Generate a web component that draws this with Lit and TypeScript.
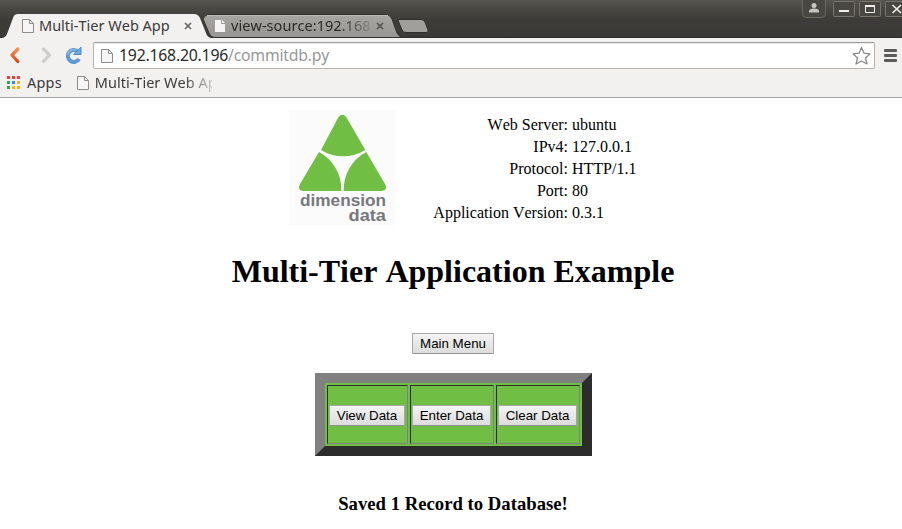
import { LitElement, html, css, svg } from "lit";
import { customElement, property } from "lit/decorators.js";

@customElement("page-icon")
class PageIcon extends LitElement {
  @property({ type: Boolean }) solid = false;
  static styles = css`
    :host { display: block; width: 12px; height: 14px; flex: none; }
    svg { display: block; }
  `;
  render() {
    return this.solid
      ? html`<svg width="12" height="14"><path d="M1 1H7V5H11V13H1Z" fill="#f4f4f3" /><path d="M8 1L11 4H8Z" fill="#f4f4f3" /></svg>`
      : html`<svg width="12" height="14"><path d="M.5 .5H7.5L11.5 4.5V13.5H.5Z" fill="#f6f6f6" stroke="#8c8c8c" /><path d="M7.5 .5V4.5H11.5" fill="none" stroke="#8c8c8c" /></svg>`;
  }
}

@customElement("browser-chrome")
class BrowserChrome extends LitElement {
  static styles = css`
    :host { display: block; font-family: "Noto Sans", "Open Sans", sans-serif; color: #3b3b3b; }
    * { box-sizing: border-box; }
    svg { display: block; flex: none; }
    .title-bar { height: 38px; display: flex; align-items: flex-end; position: relative;
      background: linear-gradient(#57564f 0, #484742 9px, #3d3c38 20px, #3b3a36 36px, #2c2b28 38px); }
    .tab { position: relative; height: 24px; display: flex; align-items: center; }
    .tab > * { position: relative; }
    .tab .shape { position: absolute; left: 0; top: 0; }
    .active { width: 202px; padding-left: 22px; z-index: 2; }
    .other { width: 194px; padding-left: 12px; }
    .tab .label { margin: 0 0 2px 5px; white-space: nowrap; overflow: hidden; font-size: 14.5px; line-height: 22px; }
    .active .label { width: 133px; }
    .other .label { width: 139px; color: #2b2923; letter-spacing: .05px;
      -webkit-mask-image: linear-gradient(90deg, #000 108px, transparent 146px); }
    .active .close { margin-left: 12px; }
    .other .close { margin-left: 6px; }
    .new-tab { margin: 0 0 4px 1px; }
    .window { position: absolute; right: 0; top: 0; }
    .toolbar { height: 34px; background: #f2f1f0; display: flex; padding: 4px 0 0 8px; }
    .nav { display: flex; width: 85px; }
    .address { width: 782px; height: 27px; border: 1px solid #b5b4b2; border-top-color: #999; border-radius: 2px;
      background: #fff; display: flex; align-items: center; padding: 0 3px 0 7px; box-shadow: inset 0 1px #eee; }
    .url { flex: 1; margin: 0 0 2px 6px; font-size: 15.8px; line-height: 24px; letter-spacing: -.22px; color: #292929; white-space: nowrap; }
    .path { color: #989898; }
    .menu { margin: 7px 0 0 9px; }
    .bookmarks { height: 26px; background: #f2f1f0; border-bottom: 1px solid #a5a4a3; display: flex; align-items: flex-start;
      padding: 0 0 0 7px; font-size: 14.5px; line-height: 20px; }
    .apps { margin: 4px 7px 0 0; }
    .apps-label { letter-spacing: .2px; }
    .bookmarks page-icon { margin: 4px 6px 0 15px; }
    .fade { width: 117px; overflow: hidden; white-space: nowrap;
      -webkit-mask-image: linear-gradient(90deg, #000 88px, transparent 125px); }
  `;
  render() {
    const colors = ["#ec4136", "#ec4136", "#ec4136", "#31a457", "#3188ed", "#f7b30b", "#31a457", "#f7b30b", "#f7b30b"];
    const close = (color: string) => html`<svg class="close" width="8" height="8"><path d="M1 1L7 7M7 1L1 7" stroke=${color} stroke-width="1.7" /></svg>`;
    return html`
      <div class="title-bar">
        <div class="tab active">
          <svg class="shape" width="212" height="24"><path d="M0 24C5 24 6 22 7 20L13 4Q14 0 18 0H194Q198 0 200 4L206 19Q207 23 211 24Z" fill="#f2f1f0" /></svg>
          <page-icon></page-icon><span class="label">Multi-Tier Web App</span>${close("#666")}
        </div>
        <div class="tab other">
          <svg class="shape" width="200" height="24">
            <defs><linearGradient id="g" x2="0" y2="1"><stop stop-color="#a7a6a3" /><stop offset="1" stop-color="#969592" /></linearGradient></defs>
            <path d="M1 5Q3 .5 7 .5H184Q188 .5 190 5L195 19Q197 22.5 200 23.5H12Q8 23 7 19Z" fill="url(#g)" stroke="#32312d" />
            <path d="M5 1.5H186" stroke="#bab9b6" />
          </svg>
          <page-icon solid></page-icon><span class="label">view-source:192.168</span>${close("#55534e")}
        </div>
        <svg class="new-tab" width="34" height="16"><path d="M2 1.5H24Q27 1.5 28 4L31 12Q32 14.5 29 14.5H9Q6 14.5 5 12L1.3 3Q1 1.5 2 1.5Z" fill="#a09f9c" stroke="#302f2b" /></svg>
        <svg class="window" width="102" height="20" fill="none">
          <path d="M2.500 0V14Q2.500 17.500 6 17.500H22Q25.500 17.500 25.500 14V0" fill="#484742" stroke="#69675f" />
          <circle cx="14" cy="5.500" r="2.500" fill="#c6c5c1" /><path d="M9 12.500V10.500Q10 8.500 14 8.500Q18 8.500 19 10.500V12.500Z" fill="#c6c5c1" />
          <g fill="#484742" stroke="#77756d"><rect x="33.500" y="1.500" width="21" height="15" rx="1" /><rect x="59.500" y="1.500" width="21" height="15" rx="1" /><rect x="85.500" y="1.500" width="21" height="15" rx="1" /></g>
          <path d="M39 11H49" stroke="#f0efeb" stroke-width="2" />
          <path d="M65.500 5.500H74.500V12.500H65.500Z" stroke="#f0efeb" /><path d="M65 6H75" stroke="#f0efeb" stroke-width="2" />
          <path d="M92.500 5L101 13M101 5L92.500 13" stroke="#f0efeb" stroke-width="1.700" />
        </svg>
      </div>
      <div class="toolbar">
        <div class="nav">
          <svg width="78" height="27" fill="none" stroke-linecap="round" stroke-linejoin="round">
            <defs><linearGradient id="o" x2="0" y2="1"><stop stop-color="#f59155" /><stop offset="1" stop-color="#d84b19" /></linearGradient></defs>
            <path d="M9.800 7L4 13L9.800 19.500" stroke="url(#o)" stroke-width="3.300" />
            <path d="M35.500 7L41.500 13L35.500 19.500" stroke="#cfcecb" stroke-width="3.300" />
            <path d="M69.500 9.200A6 6 0 1 0 71 17" stroke="#5c98d1" stroke-width="4" stroke-linecap="butt" />
            <path d="M73 5.500V12.500H66Z" fill="#72a8da" stroke="#4d8bc8" />
            <path d="M68 7.800A6 6 0 0 0 60 12.500" stroke="#8ab8e4" stroke-width="1.500" />
          </svg>
        </div>
        <div class="address">
          <page-icon></page-icon>
          <div class="url">192.168.20.196<span class="path">/commitdb.py</span></div>
          <svg width="19" height="20"><path d="M9.500 1.500L12 7.200L18 7.800L13.500 12L15 18L9.500 15L4 18L5.500 12L1 7.800L7 7.200Z" fill="none" stroke="#858585" stroke-linejoin="round" stroke-width="1.200" /></svg>
        </div>
        <svg class="menu" width="14" height="14"><g fill="#5c5b5b"><rect width="13" height="3" rx="1" /><rect y="5" width="13" height="3" rx="1" /><rect y="10" width="13" height="3" rx="1" /></g></svg>
      </div>
      <div class="bookmarks">
        <svg class="apps" width="13" height="13">${colors.map((c, i) => svg`<rect x=${(i % 3) * 5} y=${Math.floor(i / 3) * 5} width="3" height="3" fill=${c} />`)}</svg>
        <span class="apps-label">Apps</span><page-icon></page-icon><span class="fade">Multi-Tier Web App</span>
      </div>`;
  }
}

@customElement("app-root")
class AppRoot extends LitElement {
  static styles = css`
    :host { display: block; width: 902px; height: 529px; overflow: hidden; background: #fff; color: #000; font-family: "Liberation Serif", serif; font-kerning: none; }
    * { box-sizing: border-box; }
    .content { display: flex; flex-direction: column; align-items: center; padding: 12px 0 0 5px; }
    .info-row { width: 897px; display: flex; padding-left: 284px; }
    .logo { display: block; flex: none; background: #fbfbfb; }
    .info { display: grid; grid-template-columns: 173px auto; column-gap: 4px; grid-auto-rows: 22px; margin-top: 4px; font-size: 16px; line-height: 22px; }
    .name { text-align: right; white-space: nowrap; }
    h1 { margin: 28px 1px 0 0; font-size: 32px; line-height: 37px; }
    button { height: 21px; padding: 0; border: 1px solid #a7a7a7; border-bottom-color: #929292; border-radius: 1px; background: linear-gradient(#f4f4f4, #dcdcdc);
      font: 13.33px/18px "Liberation Sans", sans-serif; color: #000; white-space: nowrap; }
    .main { width: 82px; margin: 43px 1px 0 0; }
    .panel { width: 277px; height: 83px; margin-top: 19px; border: 10px solid; border-color: #808080 #2c2c2c #2c2c2c #808080; background: #70bf44;
      padding: 2px; display: grid; grid-template-columns: 81px 84px 84px; gap: 2px; }
    .cell { border: 1px solid; border-color: #2c2c2c #808080 #808080 #2c2c2c; display: flex; align-items: center; padding: 2px 2px 0 1px; }
    .cell button { width: 79px; }
    .cell:first-child button { width: 76px; }
    h3 { margin: 37px 1px 0 0; font-size: 18.72px; line-height: 22px; }
  `;
  render() {
    const info = [["Web Server:", "ubuntu"], ["IPv4:", "127.0.0.1"], ["Protocol:", "HTTP/1.1"], ["Port:", "80"], ["Application Version:", "0.3.1"]];
    return html`
      <browser-chrome></browser-chrome>
      <div class="content">
        <div class="info-row">
          <svg class="logo" width="106" height="115" viewBox="9 6 106 115">
            <g fill="#70bf44">
              <path d="M41 46L58.500 13Q62.300 8.500 66.200 13L85.300 46A42 42 0 0 1 41 46Z" />
              <path d="M39 48A42 42 0 0 1 61.200 87H23Q17 86 20 80Z" />
              <path d="M86.300 48A42 42 0 0 0 63.800 87H102Q108 86 105 80Z" />
            </g>
            <g fill="#77787b" font-family="Liberation Sans, sans-serif" font-weight="700" font-size="17.300">
              <text x="20" y="102" textLength="86" lengthAdjust="spacingAndGlyphs">dimension</text>
              <text x="68.500" y="116.500" textLength="37.500" lengthAdjust="spacingAndGlyphs">data</text>
            </g>
          </svg>
          <div class="info">${info.map(([name, value]) => html`<span class="name">${name}</span><span>${value}</span>`)}</div>
        </div>
        <h1>Multi-Tier Application Example</h1>
        <button class="main">Main Menu</button>
        <div class="panel">${["View Data", "Enter Data", "Clear Data"].map((label) => html`<div class="cell"><button>${label}</button></div>`)}</div>
        <h3>Saved 1 Record to Database!</h3>
      </div>`;
  }
}
